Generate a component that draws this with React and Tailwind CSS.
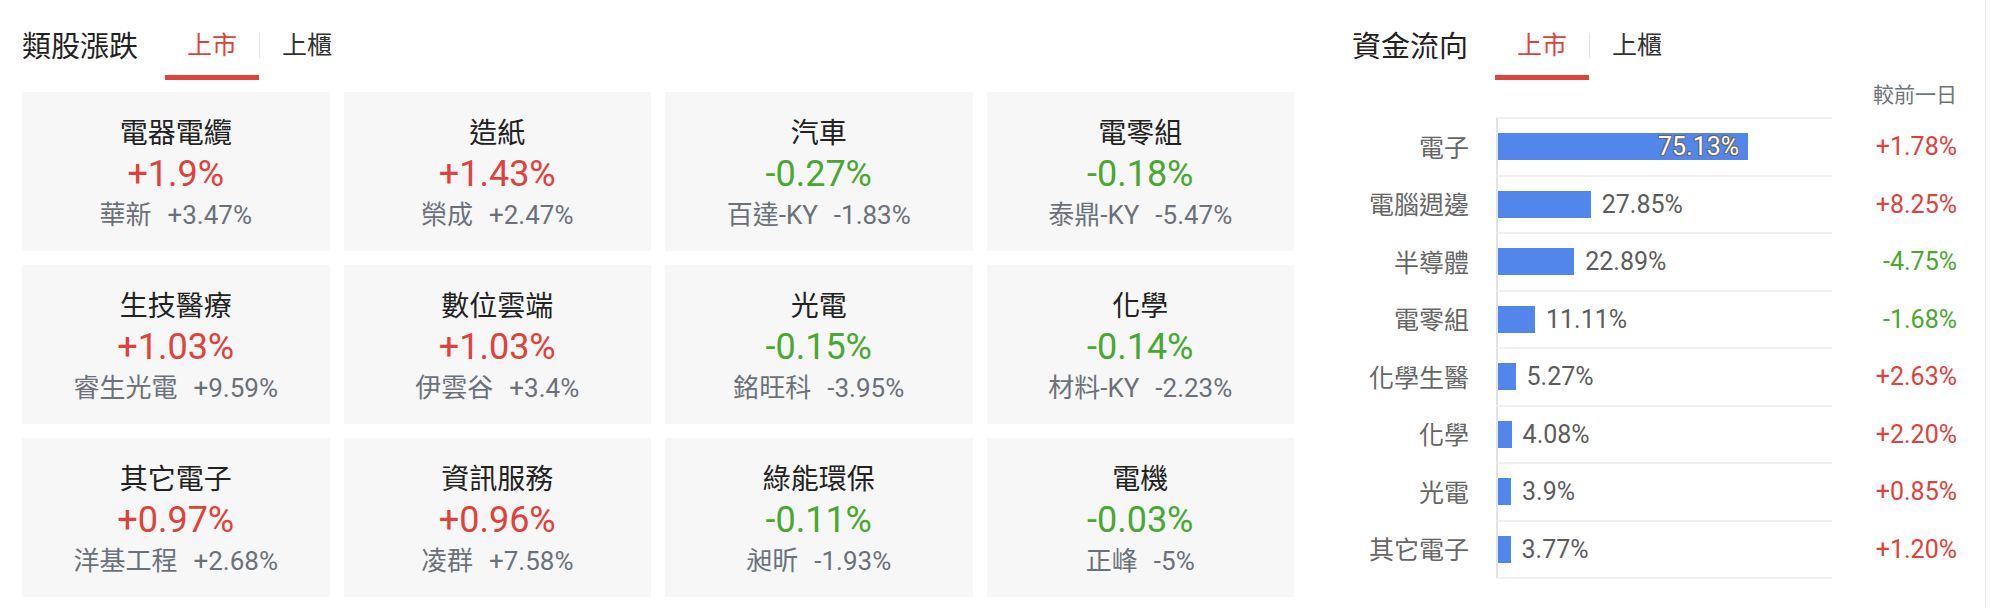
import { useState } from 'react'

const sectors = [
  { name: '電器電纜', change: 1.9, lead: '華新', leadChange: 3.47 },
  { name: '造紙', change: 1.43, lead: '榮成', leadChange: 2.47 },
  { name: '汽車', change: -0.27, lead: '百達-KY', leadChange: -1.83 },
  { name: '電零組', change: -0.18, lead: '泰鼎-KY', leadChange: -5.47 },
  { name: '生技醫療', change: 1.03, lead: '睿生光電', leadChange: 9.59 },
  { name: '數位雲端', change: 1.03, lead: '伊雲谷', leadChange: 3.4 },
  { name: '光電', change: -0.15, lead: '銘旺科', leadChange: -3.95 },
  { name: '化學', change: -0.14, lead: '材料-KY', leadChange: -2.23 },
  { name: '其它電子', change: 0.97, lead: '洋基工程', leadChange: 2.68 },
  { name: '資訊服務', change: 0.96, lead: '凌群', leadChange: 7.58 },
  { name: '綠能環保', change: -0.11, lead: '昶昕', leadChange: -1.93 },
  { name: '電機', change: -0.03, lead: '正峰', leadChange: -5 },
]

const flows = [
  { name: '電子', share: '75.13', diff: '+1.78%' },
  { name: '電腦週邊', share: '27.85', diff: '+8.25%' },
  { name: '半導體', share: '22.89', diff: '-4.75%' },
  { name: '電零組', share: '11.11', diff: '-1.68%' },
  { name: '化學生醫', share: '5.27', diff: '+2.63%' },
  { name: '化學', share: '4.08', diff: '+2.20%' },
  { name: '光電', share: '3.9', diff: '+0.85%' },
  { name: '其它電子', share: '3.77', diff: '+1.20%' },
]

const fmt = (n) => (n > 0 ? '+' : '') + n + '%'

function Tabs({ active, onChange }) {
  const tab = (key) =>
    active === key
      ? 'flex items-start h-[80px] pt-[28px] px-[22px] border-b-[5px] border-[#dd4339] text-[#dd4339]'
      : 'flex items-start h-[80px] pt-[28px] px-[22px] border-b-[5px] border-transparent text-[#333]'
  return (
    <div className="flex items-start ml-[27px]">
      <button className={tab('twse')} onClick={() => onChange('twse')}>
        <span className="block text-[25px] leading-[36px]">上市</span>
      </button>
      <span className="w-px h-[25px] mt-[33px] bg-[#e4e4e4]" />
      <button className={tab('otc')} onClick={() => onChange('otc')}>
        <span className="block text-[25px] leading-[36px]">上櫃</span>
      </button>
    </div>
  )
}

function Header({ title, active, onChange }) {
  return (
    <div className="flex items-start h-[80px]">
      <h2 className="pt-[29px] text-[29px] leading-[36px] text-[#222] font-normal">{title}</h2>
      <Tabs active={active} onChange={onChange} />
    </div>
  )
}

function SectorCard({ s }) {
  const color = s.change >= 0 ? 'text-[#e0413a]' : 'text-[#48a832]'
  return (
    <div className="h-[159px] bg-[#f7f7f7] flex flex-col items-center pt-[24px]">
      <div className="text-[28px] leading-[36px] text-[#222]">{s.name}</div>
      <div className={`text-[36px] leading-[44px] ${color}`}>{fmt(s.change)}</div>
      <div className="mt-[3px] flex gap-[16px] text-[26px] leading-[32px] text-[#6b717a]">
        <span>{s.lead}</span>
        <span>{fmt(s.leadChange)}</span>
      </div>
    </div>
  )
}

function FlowRow({ f }) {
  const pct = parseFloat(f.share)
  const inside = pct > 50
  const diffColor = f.diff.startsWith('-') ? 'text-[#48a832]' : 'text-[#e0413a]'
  return (
    <div className="flex h-[57.5px] items-center">
      <div className="w-[117px] pt-[5px] text-right text-[25px] text-[#666]">{f.name}</div>
      <div className="ml-[27px] w-[336px] h-full border-l-2 border-[#e3e3e3] border-t-2 border-t-[#f0f0f0] flex items-center">
        <div
          className="h-[27px] bg-[#5286ea] flex items-center justify-end shrink-0"
          style={{ width: (pct / 100) * 333 + 'px' }}
        >
          {inside && (
            <span className="pr-[9px] text-[25px] text-white [text-shadow:-1px_-1px_0_#666,1px_-1px_0_#666,-1px_1px_0_#666,1px_1px_0_#666,0_1px_0_#666,0_-1px_0_#666]">
              {f.share}%
            </span>
          )}
        </div>
        {!inside && <span className="ml-[11px] text-[25px] text-[#5c5c5c]">{f.share}%</span>}
      </div>
      <div className={`w-[125px] pt-[2px] text-right text-[25px] ${diffColor}`}>{f.diff}</div>
    </div>
  )
}

export default function App() {
  const [sectorTab, setSectorTab] = useState('twse')
  const [flowTab, setFlowTab] = useState('twse')

  return (
    <div className="w-[1990px] h-[608px] bg-white flex font-[Roboto,'Noto_Sans_CJK_TC',sans-serif]">
      <section className="w-[1272px] ml-[22px]">
        <Header title="類股漲跌" active={sectorTab} onChange={setSectorTab} />
        <div className="mt-[12px] grid grid-cols-4 gap-[14px]">
          {sectors.map((s) => (
            <SectorCard key={s.name} s={s} />
          ))}
        </div>
      </section>

      <section className="ml-[58px] w-[634px] pr-[28px] border-r border-[#ececec]">
        <Header title="資金流向" active={flowTab} onChange={setFlowTab} />
        <div className="h-[37px] text-right text-[21px] leading-[30px] text-[#70757a]">較前一日</div>
        <div>
          {flows.map((f) => (
            <FlowRow key={f.name} f={f} />
          ))}
          <div className="flex">
            <div className="ml-[144px] w-[336px] h-[2px] bg-[#f0f0f0]" />
          </div>
        </div>
      </section>
    </div>
  )
}
